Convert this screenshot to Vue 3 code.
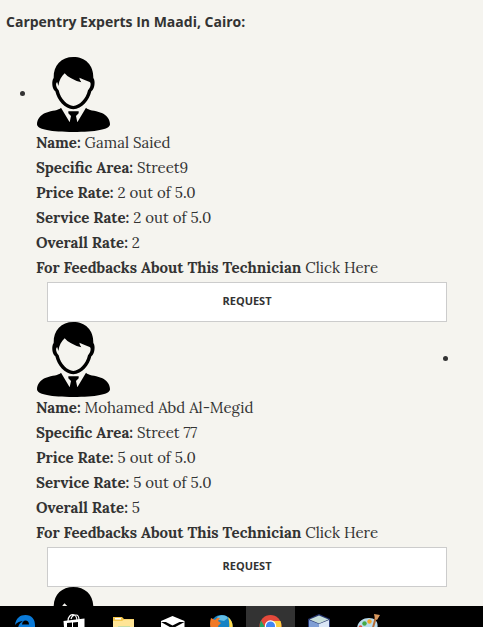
<script setup>
const technicians = [
  { id: 1, name: 'Gamal Saied', area: 'Street9', price: '2 out of 5.0', service: '2 out of 5.0', overall: '2', trailing: false },
  { id: 2, name: 'Mohamed Abd Al-Megid', area: 'Street 77', price: '5 out of 5.0', service: '5 out of 5.0', overall: '5', trailing: true },
  { id: 3, trailing: false },
]
</script>

<template>
  <div class="screen">
    <main class="page">
      <h1 class="title">Carpentry Experts In Maadi, Cairo:</h1>
      <ul class="list">
        <li v-for="t in technicians" :key="t.id" class="item">
          <div class="head" :class="{ trailing: t.trailing }">
            <span class="bullet"></span>
            <svg class="avatar" viewBox="18 21 225 225" aria-hidden="true">
              <path d="M130 21C94 21 70 45 71 84C64 92 66 118 76 124C82 151 104 177 130 178C156 177 178 151 184 124C194 118 197 92 190 84C191 45 166 21 130 21Z" />
              <path class="skin" d="M104 70C94 79 88 90 85 108L82 97C76 98 77 111 86 121C92 148 112 167 130 168C148 167 168 148 174 121C183 111 184 98 179 96L164 90L148 83Q149 90 154 97Q137 93 122 84Q111 79 104 70Z" />
              <path d="M93 173C86 181 67 181 48 188C31 194 21 208 21 223C21 239 65 246 130 246C195 246 240 239 240 223C240 208 230 194 213 188C194 181 175 181 168 173L142 217L138 198L146 190V184H115V190L123 198L119 217Z" />
            </svg>
          </div>
          <template v-if="t.name">
            <div class="info">
              <p><b>Name:</b> {{ t.name }}</p>
              <p><b>Specific Area:</b> {{ t.area }}</p>
              <p><b>Price Rate:</b> {{ t.price }}</p>
              <p><b>Service Rate:</b> {{ t.service }}</p>
              <p><b>Overall Rate:</b> {{ t.overall }}</p>
              <p><b>For Feedbacks About This Technician</b> <a href="#">Click Here</a></p>
            </div>
            <button class="request" type="button">REQUEST</button>
          </template>
        </li>
      </ul>
    </main>

    <footer class="taskbar">
      <span class="task">
        <svg viewBox="0 0 24 24"><path fill="#0a7ad8" d="M1 11C2 4 6 1 11.500 1C18 1 21 5.500 21 11V14H8C8 17 11 19 14 19C17 19 19 18 20.500 17V21C18 22.500 16 23 13 23C7 23 3.500 19 4 14C4.500 10 7 8 10 7C6 7 3 8.500 1 11ZM8 10.500H15C15 8 13.500 6.500 11.500 6.500S8.500 8 8 10.500Z" /></svg>
      </span>
      <span class="task">
        <svg viewBox="0 0 24 24"><path fill="none" stroke="#fff" stroke-width="1.200" d="M5 7C5 2 8 .7 10 .7S14 3 14 7M8 5C9 1 12 1 13 1S16 2 16 6" /><path fill="#fff" d="M.5 7L21.500 4.500V24H2Z" /><path d="M4 9L9 8.500V13H4ZM10 8.400L15 8V13H10ZM4 14H9V19L4 18ZM10 14H15V20L10 19Z" /></svg>
      </span>
      <span class="task">
        <svg viewBox="0 0 24 24"><path fill="#f3c64c" d="M1 3H10L12 5H22V23H1Z" /><path fill="#fff" d="M3 4H9V5.500H3Z" /><path fill="#ffe596" d="M1 7H10L12 5.500H22V23H1Z" /><path fill="#c6dda5" d="M6 12H18V14H6Z" /></svg>
      </span>
      <span class="task">
        <svg viewBox="0 0 24 24"><path fill="#fff" d="M0 7L11.500 2L23.500 7V23H0Z" /><path d="M0 8L23.500 8L11.500 14.500Z" /><path fill="#fff" d="M3 7H20.500L11.500 11.500Z" /></svg>
      </span>
      <span class="task">
        <svg viewBox="0 0 24 24"><circle cx="11.500" cy="12" r="11" fill="#1683c4" /><path fill="#62bde4" d="M7 3C11 0 17 1 18 4L14 7L9 6Z" /><path fill="#ffd84a" d="M18 3C23 7 24 13 21 18L16 22C20 16 20 9 18 3Z" /><path fill="#f07928" d="M1 4L5 6Q7 3 10 4L8 7L11 9L8 12L10 18L18 21Q12 25 6 21C0 17-1 10 1 4Z" /></svg>
      </span>
      <span class="task active">
        <svg viewBox="0 0 24 24"><circle cx="11.500" cy="12" r="11" fill="#e4493b" /><path fill="#21a464" d="M2 6.500C-1 13 2 22 11 23L15 17L7 15Z" /><path fill="#fccd3f" d="M12 7H21.500C24.500 15 20 23 11 23L17 13Z" /><circle cx="11.500" cy="12" r="5.700" fill="#fff" /><circle cx="11.500" cy="12" r="4.500" fill="#4286f4" /></svg>
      </span>
      <span class="task">
        <svg viewBox="0 0 24 24"><path fill="#27366f" d="M0 5L11 0L22 5V19L11 24L0 19Z" /><path fill="#c7ded9" d="M1.500 5.500L11 1.500L20.500 5.500L11 9.500Z" /><path fill="#7f9ed4" d="M1 6L11 10V22L1 18Z" /><path fill="#dae6f6" d="M11 10L21 6V18L11 22Z" /></svg>
      </span>
      <span class="task">
        <svg viewBox="0 0 24 24"><path fill="#b9dced" d="M0 14C1 7 6 4 12 4C19 4 22 9 20 15C18 22 12 24 6 22C2 20 0 18 0 14Z" /><circle cx="7.500" cy="9.500" r="2.200" fill="#45a945" /><circle cx="12.500" cy="7.500" r="2.200" fill="#f4a52a" /><circle cx="3.500" cy="13" r="1.800" fill="#df503e" /><path stroke="#b66b35" stroke-width="2" d="M19 3L15 17" /><path fill="#d99a60" d="M17 0L23 1L20 6L18 5Z" /></svg>
      </span>
    </footer>
  </div>
</template>

<style>
body {
  margin: 0;
  background: #f5f4ef;
}
</style>

<style scoped>
.screen {
  display: flex;
  flex-direction: column;
  height: 100vh;
  overflow: hidden;
  background: #f5f4ef;
  color: #333;
  font-family: Lora, "Liberation Serif", serif;
  font-size: 15px;
  line-height: 25px;
}
.page {
  flex: 1;
  min-height: 0;
  overflow: hidden;
}
.title {
  margin: 0;
  padding: 12px 6px 25px;
  font: bold 14px/20px "Open Sans", sans-serif;
}
.list {
  margin: 0;
  padding: 0 26px 0 20px;
  list-style: none;
}
.head {
  display: flex;
  align-items: center;
  gap: 11px;
}
.trailing {
  flex-direction: row-reverse;
  justify-content: space-between;
  padding: 0 9px 0 16px;
}
.bullet {
  width: 5px;
  height: 5px;
  margin-bottom: 2px;
  border-radius: 50%;
  background: #333;
}
.avatar {
  width: 75px;
  height: 75px;
}
.skin {
  fill: #f5f4ef;
}
.info {
  margin: -2px 0 2px;
  padding-left: 16px;
}
.info p {
  margin: 0;
}
.info a {
  color: inherit;
  text-decoration: none;
}
.request {
  display: block;
  box-sizing: border-box;
  width: calc(100% - 37px);
  height: 40px;
  margin: 0 10px 0 27px;
  padding: 0 0 2px;
  border: 1px solid #ccc;
  background: #fff;
  color: #333;
  font: bold 11px/20px "Open Sans", sans-serif;
}
.taskbar {
  display: flex;
  flex: none;
  height: 21px;
  padding-left: 1px;
  overflow: hidden;
  background: #000;
}
.task {
  display: flex;
  justify-content: center;
  width: 49px;
  height: 40px;
  padding-top: 8px;
  box-sizing: border-box;
}
.task svg {
  width: 24px;
  height: 24px;
}
.active {
  background: #333;
}
</style>
